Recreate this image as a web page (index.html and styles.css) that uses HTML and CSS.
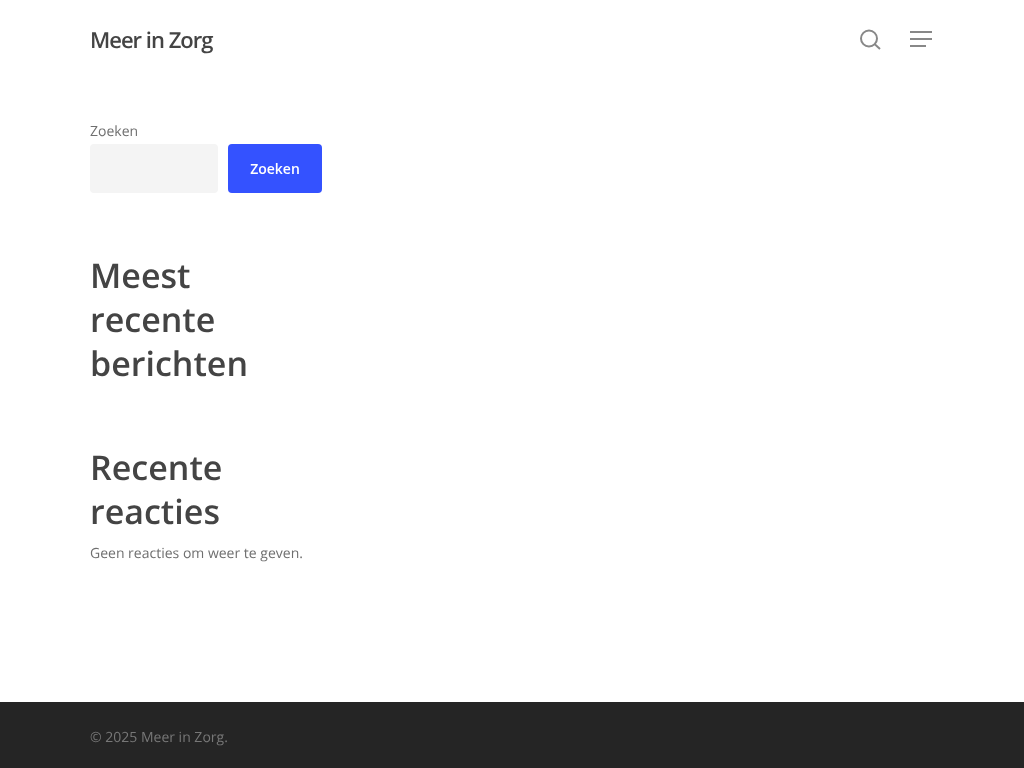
FILE: index.html
```html
<!DOCTYPE html>
<html lang="nl">
<head>
  <meta charset="UTF-8" />
  <title>Meer in Zorg</title>
  <link rel="stylesheet" href="styles.css">
</head>
<body>

  <header class="site-header">
    <a class="logo" href="#">Meer in Zorg</a>
    <div class="header-icons">
      <svg class="icon-search" width="24" height="24" viewBox="0 0 24 24" fill="none" stroke="#888" stroke-width="2" aria-label="Zoeken">
        <circle cx="11" cy="10.5" r="8" />
        <path d="M16.8 16.3l5.2 4.7" />
      </svg>
      <div class="icon-menu" aria-label="Menu">
        <span class="bar"></span>
        <span class="bar"></span>
        <span class="bar short"></span>
      </div>
    </div>
  </header>

  <main class="content">
    <form class="search-form">
      <label class="search-label" for="s">Zoeken</label>
      <div class="search-row">
        <input class="search-input" type="text" id="s" />
        <button class="search-btn" type="button">Zoeken</button>
      </div>
    </form>

    <section class="widget">
      <h2>Meest<br>recente<br>berichten</h2>
    </section>

    <section class="widget">
      <h2>Recente<br>reacties</h2>
      <p>Geen reacties om weer te geven.</p>
    </section>
  </main>

  <footer class="site-footer">
    <p>© 2025 Meer in Zorg.</p>
  </footer>

</body>
</html>
```

FILE: styles.css
```css
body {
  margin: 0;
  height: 768px;
  display: flex;
  flex-direction: column;
  font-family: 'Open Sans', sans-serif;
  font-size: 14px;
  line-height: 22px;
  color: #6f6f6f;
  background: #fff;
  overflow: hidden;
  text-rendering: geometricPrecision;
  will-change: opacity;
}

/* Header */
.site-header {
  display: flex;
  align-items: center;
  justify-content: space-between;
  height: 80px;
  padding: 0 92px 0 90px;
}
.logo {
  font-size: 22px;
  font-weight: 600;
  letter-spacing: -1px;
  color: #444;
  text-decoration: none;
}
.header-icons {
  display: flex;
  align-items: center;
  gap: 28px;
}
.icon-search {
  display: block;
}
.icon-menu {
  display: flex;
  flex-direction: column;
  gap: 5px;
  width: 22px;
  margin-bottom: 2px;
}
.bar {
  display: block;
  height: 2px;
  background: #888;
}
.bar.short {
  width: 16px;
}

/* Content */
.content {
  flex: 1;
  padding: 41px 90px 0;
}
.search-label {
  display: block;
  margin-bottom: 1px;
}
.search-row {
  display: flex;
  gap: 10px;
}
.search-input {
  width: 128px;
  height: 49px;
  padding: 0;
  border: none;
  border-radius: 4px;
  box-sizing: border-box;
  background: #f4f4f4;
}
.search-btn {
  width: 94px;
  height: 49px;
  padding: 0;
  border: none;
  border-radius: 4px;
  background: #3452ff;
  color: #fff;
  font-family: inherit;
  font-size: 14px;
  font-weight: 600;
}
.widget {
  margin-top: 60px;
}
.widget h2 {
  margin: 0;
  font-size: 34px;
  line-height: 44px;
  font-weight: 600;
  color: #444;
}
.widget p {
  margin: 10px 0 0;
}

/* Footer */
.site-footer {
  height: 66px;
  padding: 6px 90px 0;
  box-sizing: border-box;
  display: flex;
  align-items: center;
  background: #252525;
  color: #777;
}
.site-footer p {
  margin: 0;
}
```
